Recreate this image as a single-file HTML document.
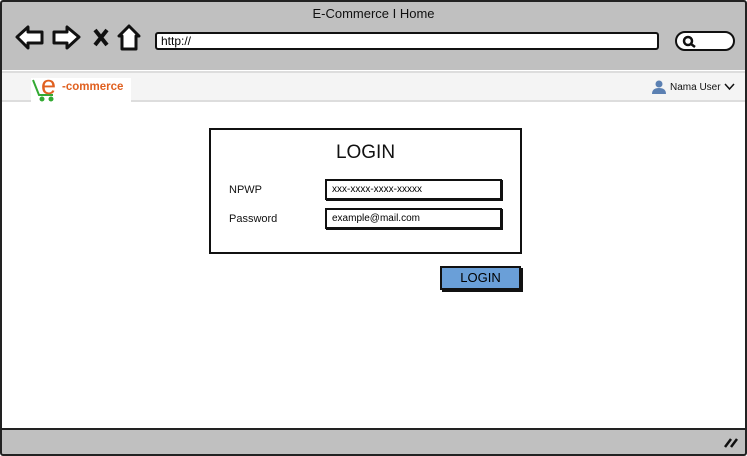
<!DOCTYPE html>
<html><head><style>
*{margin:0;padding:0;box-sizing:border-box}
body{width:747px;height:456px;position:relative;background:#fff;font-family:"Liberation Sans",sans-serif;overflow:hidden}
.frame{position:absolute;left:0;top:0;width:747px;height:456px;border:2px solid #222;border-radius:3px}
.hdr{position:absolute;left:2px;top:2px;width:743px;height:68px;background:#c0c0c0}
.title{position:absolute;top:6px;left:0;width:747px;text-align:center;font-size:13px;color:#111}
.url{position:absolute;left:155px;top:32px;width:504px;height:18px;background:#fff;border:2px solid #111;border-radius:3px;font-size:12px;padding-left:4px;line-height:14px}
.search{position:absolute;left:675px;top:31px;width:60px;height:20px;background:#fff;border:2px solid #111;border-radius:10px}
.nav{position:absolute;left:2px;top:71px;width:743px;height:31px;background:#f4f4f4;border-top:2px solid #ddd;border-bottom:2px solid #ddd}
.foot{position:absolute;left:2px;top:428px;width:743px;height:26px;background:#c0c0c0;border-top:2px solid #222}
.box{position:absolute;left:209px;top:128px;width:313px;height:126px;border:2px solid #111}
.lt{position:absolute;left:0;width:100%;top:12px;text-align:center;font-size:19px;color:#111}
.lbl{position:absolute;font-size:11px;color:#111}
.in{position:absolute;background:#fff;border:2px solid #111;font-size:10px;padding-left:5px;line-height:17px;width:177px;height:21px;box-shadow:1px 1px 0 #111}
.btn{position:absolute;left:440px;top:266px;width:81px;height:24px;background:#6a9fd8;border:2px solid #111;box-shadow:2px 2px 0 #111;text-align:center;font-size:13px;line-height:20px}
</style></head><body>
<div class="hdr"></div>
<div class="title">E-Commerce I Home</div>
<svg style="position:absolute;left:14px;top:24px" width="132" height="28" viewBox="0 0 132 28">
<g fill="#fff" stroke="#111" stroke-width="3" stroke-linejoin="round">
<path d="M3 13 L14 3 L14 8 L28 8 L28 19 L14 19 L14 24 Z"/>
<path d="M65 13 L53 3 L53 8 L40 8 L40 19 L53 19 L53 24 Z"/>
<path d="M115 2 L105 12 L108 12 L108 25 L122 25 L122 12 L125 12 Z"/>
</g>
<path d="M81 6 L93 21 M93 6 L81 21" stroke="#111" stroke-width="4"/>
</svg>
<div class="url">http://</div>
<div class="search"><svg width="20" height="16" style="position:absolute;left:3px;top:1px"><circle cx="8" cy="7" r="4" fill="none" stroke="#111" stroke-width="2.5"/><path d="M11 10 L15 13" stroke="#111" stroke-width="2.5"/></svg></div>
<div class="nav"></div>
<div style="position:absolute;left:31px;top:78px;width:100px;height:24px;background:#fff"></div>
<svg style="position:absolute;left:31px;top:78px" width="30" height="24"><path d="M2 2 L8 17 L22 17" fill="none" stroke="#3a3" stroke-width="2"/><circle cx="11" cy="21" r="2.5" fill="#3a3"/><circle cx="20" cy="21" r="2.5" fill="#3a3"/></svg>
<div style="position:absolute;left:41px;top:70px;font-size:27px;color:#e06020;line-height:30px">e</div>
<div style="position:absolute;left:62px;top:81px;font-size:11.5px;font-weight:bold;color:#e06020">-commerce</div>
<svg style="position:absolute;left:652px;top:80px" width="14" height="14"><circle cx="7" cy="4" r="3.5" fill="#5b80b2"/><path d="M0 14 Q0 8 7 8 Q14 8 14 14Z" fill="#5b80b2"/></svg>
<div style="position:absolute;left:670px;top:82px;font-size:10px;color:#111">Nama User</div>
<svg style="position:absolute;left:724px;top:83px" width="11" height="8"><path d="M1 1 L5.5 6 L10 1" fill="none" stroke="#111" stroke-width="1.5"/></svg>
<div class="box"><div class="lt">LOGIN</div></div>
<div class="lbl" style="left:229px;top:184px">NPWP</div>
<div class="lbl" style="left:229px;top:213px">Password</div>
<div class="in" style="left:325px;top:179px">xxx-xxxx-xxxx-xxxxx</div>
<div class="in" style="left:325px;top:208px">example@mail.com</div>
<div class="btn">LOGIN</div>
<div class="foot"><svg style="position:absolute;right:6px;top:5px" width="16" height="14"><path d="M2 12 L8 4 M8 12 L14 4" stroke="#111" stroke-width="2.5"/></svg></div>
<div class="frame"></div>
</body></html>
